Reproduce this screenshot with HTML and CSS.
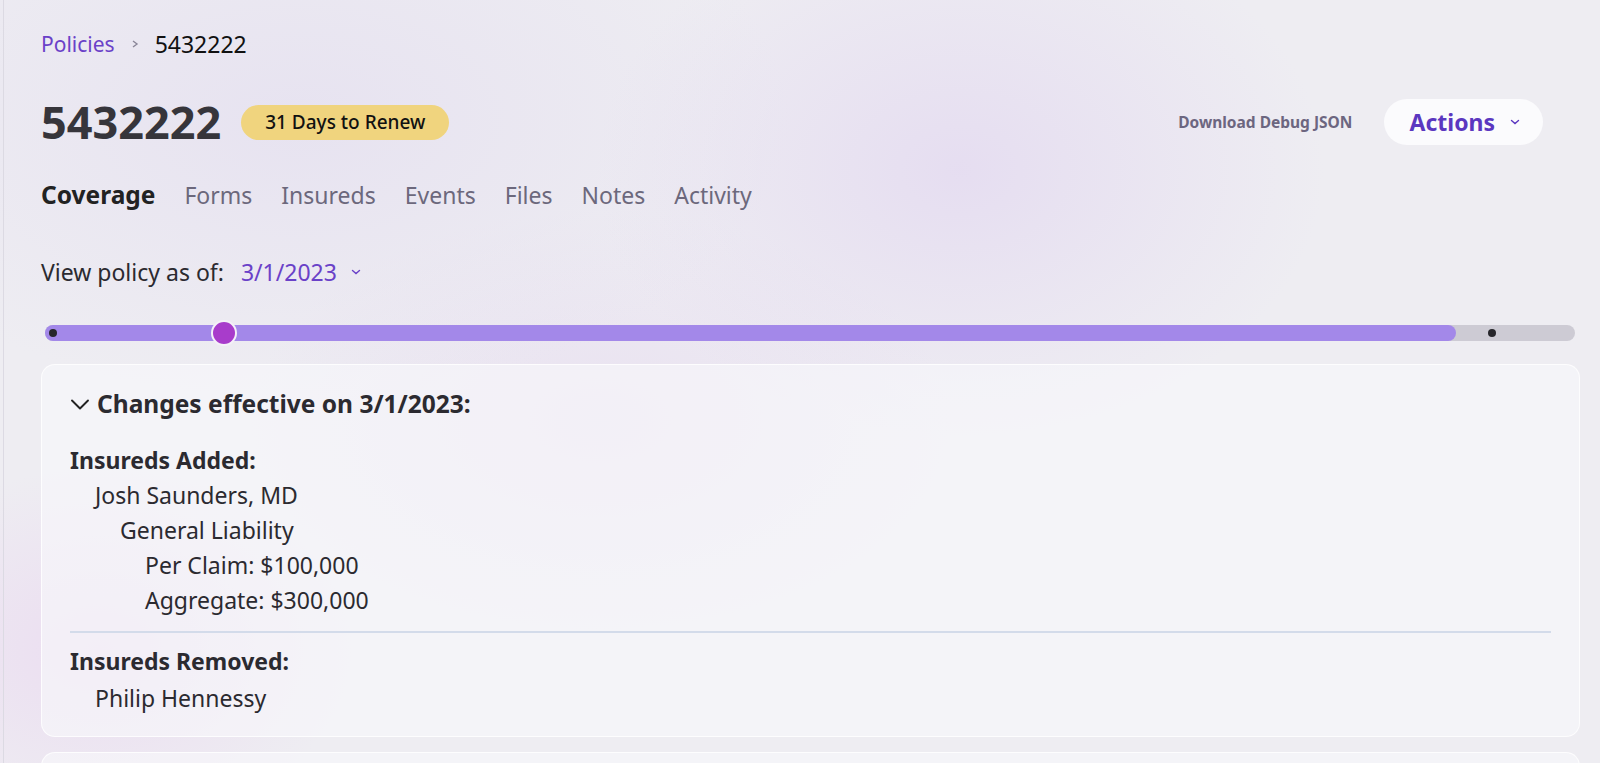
FILE: index.html
```html
<!DOCTYPE html>
<html lang="en">
<head>
    <meta charset="UTF-8">
    <meta name="viewport" content="width=device-width, initial-scale=1.0">
    <title>5432222 - Policies</title>
    <link rel="stylesheet" href="styles.css">
</head>
<body>
    <div class="layout">
        <main class="main">
            <nav class="breadcrumb">
                <a href="#" class="crumb-link">Policies</a>
                <svg class="crumb-sep" width="10" height="10" viewBox="0 0 10 10"><polyline points="3,2 7,5 3,8" fill="none" stroke="#8a8698" stroke-width="1.4"/></svg>
                <span class="crumb-current">5432222</span>
            </nav>

            <div class="page-header">
                <div class="title-group">
                    <h1>5432222</h1>
                    <span class="badge">31 Days to Renew</span>
                </div>
                <div class="header-actions">
                    <a href="#" class="debug-link">Download Debug JSON</a>
                    <button class="actions-button">
                        Actions
                        <svg width="12" height="12" viewBox="0 0 12 12"><polyline points="2.5,4.5 6,7.5 9.5,4.5" fill="none" stroke="#5b37c0" stroke-width="1.4" stroke-linecap="round"/></svg>
                    </button>
                </div>
            </div>

            <div class="tabs">
                <a href="#" class="tab active">Coverage</a>
                <a href="#" class="tab">Forms</a>
                <a href="#" class="tab">Insureds</a>
                <a href="#" class="tab">Events</a>
                <a href="#" class="tab">Files</a>
                <a href="#" class="tab">Notes</a>
                <a href="#" class="tab">Activity</a>
            </div>

            <div class="as-of">
                <span>View policy as of:</span>
                <button class="date-picker">
                    3/1/2023
                    <svg width="12" height="12" viewBox="0 0 12 12"><polyline points="2.5,4.5 6,7.5 9.5,4.5" fill="none" stroke="#6a41c8" stroke-width="1.4" stroke-linecap="round"/></svg>
                </button>
            </div>

            <div class="timeline">
                <div class="timeline-fill" style="width: 92.2%"></div>
                <span class="timeline-dot" style="left: 4px"></span>
                <span class="timeline-dot" style="left: 1443px"></span>
                <span class="timeline-thumb" style="left: 166px"></span>
            </div>

            <section class="card">
                <h2 class="card-title">
                    <svg width="22" height="22" viewBox="0 0 22 22"><polyline points="3,7.5 11,15.5 19,7.5" fill="none" stroke="#222" stroke-width="1.9" stroke-linecap="round" stroke-linejoin="round"/></svg>
                    Changes effective on 3/1/2023:
                </h2>

                <div class="change-group">
                    <h3>Insureds Added:</h3>
                    <div class="indent">
                        <div>Josh Saunders, MD</div>
                        <div class="indent">
                            <div>General Liability</div>
                            <div class="indent">
                                <div>Per Claim: $100,000</div>
                                <div>Aggregate: $300,000</div>
                            </div>
                        </div>
                    </div>
                </div>

                <hr class="divider">

                <div class="change-group removed">
                    <h3>Insureds Removed:</h3>
                    <div class="indent">
                        <div>Philip Hennessy</div>
                    </div>
                </div>
            </section>

            <section class="card card-next"></section>
        </main>
    </div>
</body>
</html>
```

FILE: styles.css
```css
body {
    margin: 0;
    font-family: 'Noto Sans', sans-serif;
    color: #2b2a30;
    background-color: #eeedf2;
    background-image:
        radial-gradient(ellipse 520px 380px at 960px 170px, rgba(224, 211, 240, 0.6), rgba(224, 211, 240, 0) 70%),
        radial-gradient(ellipse 360px 260px at 100px 650px, rgba(234, 214, 240, 0.7), rgba(234, 214, 240, 0) 70%),
        radial-gradient(ellipse 700px 400px at 300px 120px, rgba(229, 224, 240, 0.8), rgba(229, 224, 240, 0) 70%),
        radial-gradient(ellipse 500px 300px at 600px 420px, rgba(230, 218, 240, 0.6), rgba(230, 218, 240, 0) 70%);
    background-attachment: fixed;
}

a {
    text-decoration: none;
}

button {
    font-family: inherit;
    border: none;
    background: none;
    cursor: pointer;
    padding: 0;
}

.layout {
    padding-left: 3px;
}

.main {
    border-left: 1px solid #dcdae3;
    padding: 29px 20px 0 37px;
    min-height: 900px;
}

/* breadcrumb */
.breadcrumb {
    display: flex;
    align-items: center;
    gap: 15px;
    font-size: 21px;
    line-height: 30px;
}

.crumb-link {
    color: #6a41c8;
}

.crumb-current {
    color: #111;
    font-size: 23px;
}

/* header */
.page-header {
    display: flex;
    align-items: center;
    justify-content: space-between;
    margin-top: 35px;
    padding-right: 37px;
}

.title-group {
    display: flex;
    align-items: center;
    gap: 20px;
}

h1 {
    margin: 0;
    font-size: 45px;
    line-height: 56px;
    font-weight: 700;
    color: #36353b;
}

.badge {
    background-color: #f0d47e;
    color: #111;
    font-size: 19px;
    font-weight: 500;
    line-height: 35px;
    padding: 0 24px;
    border-radius: 18px;
}

.header-actions {
    display: flex;
    align-items: center;
    gap: 32px;
}

.debug-link {
    color: #6c6680;
    font-size: 15.5px;
    font-weight: 700;
}

.actions-button {
    display: flex;
    align-items: center;
    gap: 14px;
    height: 46px;
    padding: 0 22px 0 25px;
    background-color: #fbfbfd;
    border-radius: 23px;
    color: #5b37c0;
    font-size: 23px;
    font-weight: 700;
}

/* tabs */
.tabs {
    display: flex;
    align-items: center;
    gap: 29px;
    margin-top: 29px;
}

.tab {
    font-size: 23px;
    line-height: 32px;
    color: #6c687c;
}

.tab.active {
    color: #222;
    font-size: 24.5px;
    font-weight: 700;
}

/* date picker */
.as-of {
    display: flex;
    align-items: center;
    gap: 17px;
    margin-top: 45px;
    font-size: 23px;
    line-height: 30px;
    color: #2b2a30;
}

.date-picker {
    display: flex;
    align-items: center;
    gap: 13px;
    color: #6a41c8;
    font-size: 23px;
}

/* timeline */
.timeline {
    position: relative;
    height: 16px;
    margin: 37px 5px 0 4px;
    background-color: #cdcbd4;
    border-radius: 8px;
}

.timeline-fill {
    height: 100%;
    background-color: #a388e9;
    border-radius: 8px;
}

.timeline-dot {
    position: absolute;
    top: 4px;
    width: 8px;
    height: 8px;
    border-radius: 50%;
    background-color: #27262b;
}

.timeline-thumb {
    position: absolute;
    top: -5px;
    width: 22px;
    height: 22px;
    border-radius: 50%;
    background-color: #a83ccb;
    border: 2px solid #f4f1f8;
}

/* change card */
.card {
    margin-top: 23px;
    padding: 23px 28px 20px 28px;
    background-color: rgba(248, 247, 250, 0.65);
    border: 1px solid rgba(255, 255, 255, 0.8);
    border-radius: 14px;
    font-size: 23px;
    line-height: 35px;
}

.card-title {
    display: flex;
    align-items: center;
    gap: 6px;
    margin: 0 0 23px -1px;
    font-size: 24.5px;
    line-height: 32px;
    font-weight: 700;
    color: #2b2a30;
}

.change-group h3 {
    margin: 0;
    font-size: 23px;
    font-weight: 700;
}

.change-group.removed .indent {
    margin-top: 2px;
}

.indent {
    padding-left: 25px;
}

.divider {
    border: none;
    height: 2px;
    background-color: #d3dbea;
    margin: 13px 0 11px 0;
}

.card-next {
    margin-top: 15px;
    height: 200px;
    padding: 0;
}
```
